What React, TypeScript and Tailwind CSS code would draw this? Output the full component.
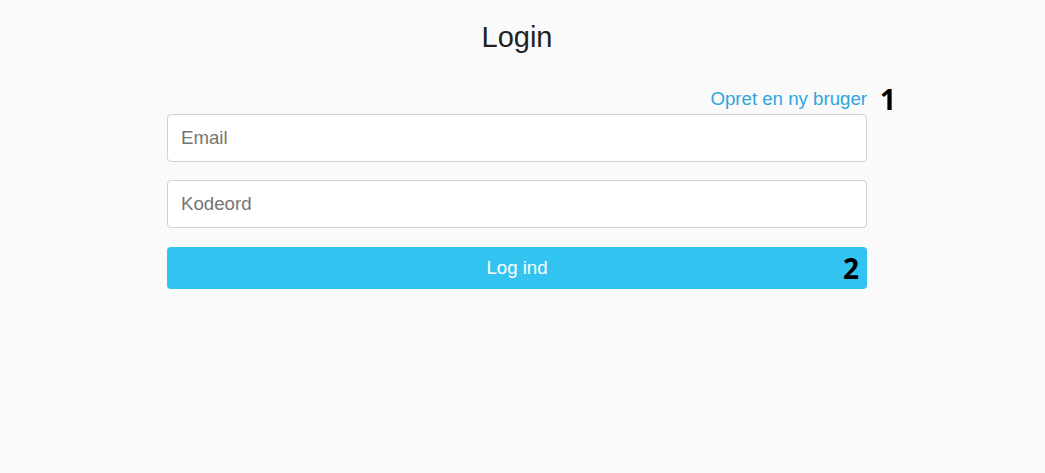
import type React from "react"

const App: React.FC = () => {
  return (
    <div className="min-h-screen w-full bg-[#fafafa] font-['Liberation_Sans',Arial,sans-serif] text-[#222]">
      <div className="w-[700px] ml-[167px] pt-[19px]">
        {/* Title */}
        <h1 className="text-center text-[29px] leading-[36px] font-normal">Login</h1>

        {/* Create user link */}
        <div className="mt-[32px] flex justify-end">
          <span className="relative">
            <a href="#" className="text-[18.67px] leading-[24px] text-[#2ea6dd]">
              Opret en ny bruger
            </a>
            {/* annotation 1 */}
            <span className="absolute left-[calc(100%+13px)] top-[-2px] font-['Open_Sans',sans-serif] font-bold text-[28px] leading-[28px] text-black">
              1
            </span>
          </span>
        </div>

        <form className="mt-[2px] flex flex-col">
          <input
            type="email"
            placeholder="Email"
            className="h-[48px] w-full rounded-[4px] border border-[#d1d1d1] bg-white px-[13px] text-[18.67px] placeholder:text-[#757575] outline-none"
          />
          <input
            type="password"
            placeholder="Kodeord"
            className="mt-[18px] h-[48px] w-full rounded-[4px] border border-[#d1d1d1] bg-white px-[13px] text-[18.67px] placeholder:text-[#757575] outline-none"
          />
          <button
            type="button"
            className="relative mt-[19px] h-[42px] w-full rounded-[4px] bg-[#33c3f0] text-[18.67px] text-white"
          >
            Log ind
            {/* annotation 2 */}
            <span className="absolute right-[8px] top-[7px] font-['Open_Sans',sans-serif] font-bold text-[28px] leading-[28px] text-black">
              2
            </span>
          </button>
        </form>
      </div>
    </div>
  )
}

export default App
